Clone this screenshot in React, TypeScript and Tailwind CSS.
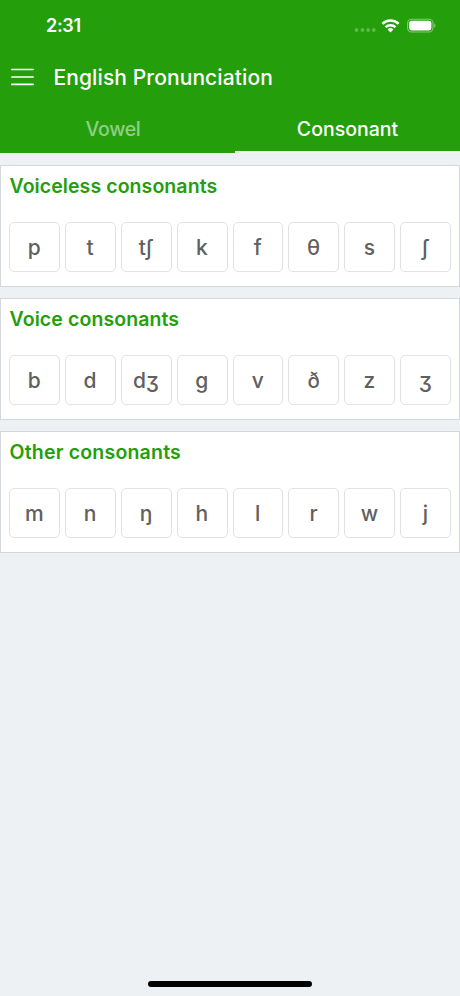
import React from 'react';

interface ConsonantGroup {
  title: string;
  titleClass: string;
  symbols: string[];
}

const groups: ConsonantGroup[] = [
  { title: 'Voiceless consonants', titleClass: 'tracking-[0.08px]', symbols: ['p', 't', 'tʃ', 'k', 'f', 'θ', 's', 'ʃ'] },
  { title: 'Voice consonants', titleClass: 'tracking-[0.1px]', symbols: ['b', 'd', 'dʒ', 'g', 'v', 'ð', 'z', 'ʒ'] },
  { title: 'Other consonants', titleClass: 'tracking-[0.2px]', symbols: ['m', 'n', 'ŋ', 'h', 'l', 'r', 'w', 'j'] },
];

const StatusBar: React.FC = () => (
  <div className="flex h-[51px] items-center justify-between pl-[46px] pr-[23px]">
    <span className="text-[18px] font-semibold leading-none tracking-[-0.3px]">2:31</span>
    <div className="flex items-center">
      <svg width="22" height="18" viewBox="0 0 22 18" fill="#fff" opacity="0.27">
        <circle cx="2.5" cy="13" r="1.9" />
        <circle cx="8.4" cy="13" r="1.9" />
        <circle cx="14.2" cy="13" r="1.9" />
        <circle cx="19.8" cy="13" r="1.9" />
      </svg>
      <svg className="ml-[5px]" width="19" height="18" viewBox="0 0 19 18" fill="none" stroke="#fff" strokeWidth="2.5">
        <path d="M1.4 6.9a11.4 11.4 0 0 1 16.2 0" />
        <path d="M4.5 10.2a7.1 7.1 0 0 1 10 0" />
        <path d="M9.5 15.4 6.6 12.5a4.1 4.1 0 0 1 5.8 0Z" fill="#fff" stroke="none" />
      </svg>
      <svg className="ml-[7px]" width="30" height="18" viewBox="0 0 30 18">
        <rect x="0.6" y="2.2" width="25.4" height="12.8" rx="4" fill="none" stroke="#fff" strokeOpacity="0.45" strokeWidth="1.1" />
        <rect x="2.2" y="3.8" width="22.2" height="9.6" rx="2.4" fill="#fff" />
        <path d="M27.3 6.5c1.6.7 1.6 3.5 0 4.2Z" fill="#fff" fillOpacity="0.5" />
      </svg>
    </div>
  </div>
);

const NavBar: React.FC = () => (
  <div className="flex h-[53px] items-center pl-[11px]">
    <button aria-label="Menu">
      <svg width="23" height="19" viewBox="0 0 23 19" stroke="#fff" strokeWidth="1.7" strokeLinecap="round">
        <path d="M.9 1.5h21.2M.9 9h21.2M.9 16.4h21.2" />
      </svg>
    </button>
    <h1 className="ml-[19.5px] text-[21px] font-medium leading-none tracking-[0.1px]">English Pronunciation</h1>
  </div>
);

const Tabs: React.FC = () => (
  <div className="flex h-[49px] text-[19.5px] font-medium">
    <button className="w-[235px] pr-[9px] pt-[3px] tracking-[-0.3px] text-white/50">Vowel</button>
    <button className="flex-1 border-b-2 border-[#eff8ed] pt-[5px]">Consonant</button>
  </div>
);

const ConsonantCard: React.FC<{ group: ConsonantGroup }> = ({ group }) => (
  <section className="h-[122px] border border-[#d3d8dc] bg-white px-2 pt-[7px]">
    <h2 className={`pl-[0.5px] text-[19.5px] font-semibold leading-[26px] text-[#249e0b] ${group.titleClass}`}>{group.title}</h2>
    <div className="mt-[23px] grid grid-cols-8 gap-[5px]">
      {group.symbols.map((symbol) => (
        <button
          key={symbol}
          className="flex h-[50px] items-center justify-center rounded-[5px] border border-[#e2e2e2] pr-px pt-px text-[21px] font-medium tracking-[-0.6px] text-[#606060]"
        >
          {symbol}
        </button>
      ))}
    </div>
  </section>
);

export default function App() {
  return (
    <div className="flex h-[996px] w-[460px] flex-col bg-[#edf1f4] font-['Inter','Noto_Sans',sans-serif]">
      <header className="bg-[#249e0b] text-white">
        <StatusBar />
        <NavBar />
        <Tabs />
      </header>
      <main className="flex flex-1 flex-col gap-[11.2px] pt-3">
        {groups.map((group) => (
          <ConsonantCard key={group.title} group={group} />
        ))}
      </main>
      <div className="mx-auto mb-[9px] h-[6px] w-[164px] rounded-full bg-black" />
    </div>
  );
}
